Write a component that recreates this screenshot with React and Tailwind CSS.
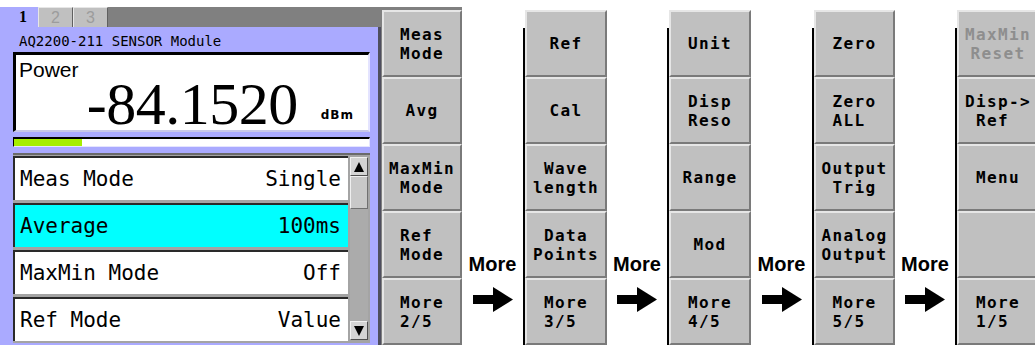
import React from 'react'

const MONO = "font-['DejaVu_Sans_Mono',monospace]"

const COLUMNS = [
  [{ t: 'Meas\nMode' }, { t: 'Avg' }, { t: 'MaxMin\nMode' }, { t: 'Ref \nMode' }, { t: 'More\n2/5 ' }],
  [{ t: 'Ref' }, { t: 'Cal' }, { t: 'Wave\nlength' }, { t: 'Data\nPoints' }, { t: 'More\n3/5 ' }],
  [{ t: 'Unit' }, { t: 'Disp\nReso' }, { t: 'Range' }, { t: 'Mod' }, { t: 'More\n4/5 ' }],
  [{ t: 'Zero' }, { t: 'Zero\nALL ' }, { t: 'Output\nTrig' }, { t: 'Analog\nOutput' }, { t: 'More\n5/5 ' }],
  [{ t: 'MaxMin\nReset', dim: true }, { t: 'Disp->\n Ref  ' }, { t: 'Menu' }, { t: '' }, { t: 'More\n1/5 ' }],
]

const ROWS = [
  { name: 'Meas Mode', value: 'Single' },
  { name: 'Average', value: '100ms', active: true },
  { name: 'MaxMin Mode', value: 'Off' },
  { name: 'Ref Mode', value: 'Value' },
]

function SoftKey({ t, dim }) {
  return (
    <div className="h-[67px] flex items-center justify-center bg-[#c0c0c0] border-2 border-t-[#e6e6e6] border-l-[#e6e6e6] border-b-[#7a7a7a] border-r-[#7a7a7a]">
      <div
        className={`${MONO} whitespace-pre text-center font-bold text-[16px] leading-[19px] tracking-[1.4px] ${dim ? 'text-[#8e8e8e]' : 'text-black'}`}
      >
        {t}
      </div>
    </div>
  )
}

function KeyStack({ keys, width }) {
  return (
    <div className={`mt-[10px] ${width} flex flex-col shrink-0`}>
      {keys.map((k, i) => (
        <SoftKey key={i} t={k.t} dim={k.dim} />
      ))}
    </div>
  )
}

function KeyColumn({ keys, width }) {
  return (
    <div className="flex shrink-0">
      <div className="w-[2px] mt-[28px] bg-black" />
      <KeyStack keys={keys} width={width} />
    </div>
  )
}

function MoreArrow({ width }) {
  return (
    <div className={`${width} shrink-0 flex flex-col items-center pt-[252px]`}>
      <span className="font-['Liberation_Sans',Arial,sans-serif] font-bold text-[20px] leading-[24px] text-black">More</span>
      <svg className="mt-[11px]" width="40" height="25" viewBox="0 0 40 25">
        <rect x="0" y="8" width="21" height="9" fill="#000" />
        <polygon points="20,0 40,12.5 20,25" fill="#000" />
      </svg>
    </div>
  )
}

function ScrollButton({ up }) {
  return (
    <div className="h-[19px] flex items-center justify-center bg-[#d4d4d4] border border-t-[#f0f0f0] border-l-[#f0f0f0] border-b-[#505050] border-r-[#505050]">
      <svg width="10" height="10" viewBox="0 0 10 10">
        {up ? <polygon points="5,0 10,10 0,10" fill="#000" /> : <polygon points="0,0 10,0 5,10" fill="#000" />}
      </svg>
    </div>
  )
}

function ParamList() {
  return (
    <div className="mt-[6px] h-[190px] flex gap-[2px] pr-[2px] pt-[1px] pb-[2px] bg-[#a4a4a4] border-t-2 border-t-[#6a6a6a]">
      <div className="w-[335px] flex flex-col gap-[3px]">
        {ROWS.map((r) => (
          <div
            key={r.name}
            className={`h-[44px] flex items-center justify-between pl-[5px] pr-[7px] border-t-2 border-l-2 border-t-[#2a2a2a] border-l-[#2a2a2a] ${r.active ? 'bg-[#00ffff]' : 'bg-white'} ${MONO} text-[21px] leading-none text-black`}
          >
            <span>{r.name}</span>
            <span>{r.value}</span>
          </div>
        ))}
      </div>
      <div className="w-[18px] flex flex-col pt-[1px] pb-[1px]">
        <ScrollButton up />
        <div className="h-[33px] bg-[#c8c8c8] border border-t-[#efefef] border-l-[#efefef] border-b-[#707070] border-r-[#707070]" />
        <div className="flex-1 bg-[#ababab]" />
        <ScrollButton />
      </div>
    </div>
  )
}

function ModulePanel() {
  return (
    <div className="w-[381px] flex flex-col shrink-0">
      <div className="h-[20px] flex">
        <div className="w-[38px] bg-[#aaaaff] pl-[19px] font-['Liberation_Serif',serif] font-bold text-[16px] leading-[19px] text-black">1</div>
        <div className="w-[35px] bg-[#c0c0c0] border border-t-[#e6e6e6] border-l-[#e6e6e6] border-r-[#606060] border-b-0 text-center font-['Liberation_Sans',sans-serif] text-[16px] leading-[19px] text-[#9c9c9c]">2</div>
        <div className="w-[35px] bg-[#c0c0c0] border border-t-[#e6e6e6] border-l-[#e6e6e6] border-r-[#606060] border-b-0 text-center font-['Liberation_Sans',sans-serif] text-[16px] leading-[19px] text-[#9c9c9c]">3</div>
        <div className="flex-1" />
      </div>
      <div className="flex-1 bg-[#aaaaff] border-r-[3px] border-r-[#4e4e5e] pl-[13px] pr-[8px] flex flex-col">
        <div className={`h-[25px] pt-[6px] pl-[6px] ${MONO} text-[14px] leading-[16px] text-black`}>AQ2200-211 SENSOR Module</div>
        <div className="h-[80px] bg-white border-t-[3px] border-l-[3px] border-t-black border-l-black border-r-2 border-b-2 border-r-[#e4e4ff] border-b-[#c8c8e8]">
          <div className="pt-[3px] pl-[3px] font-['Liberation_Sans',Arial,sans-serif] text-[21px] leading-[24px] text-black">Power</div>
          <div className="text-right pr-[14px] font-['Liberation_Serif',serif] text-[60px] leading-[44px] tracking-[-0.5px] text-black">
            <span>-84.1520</span>
            <span className="ml-[23px] align-[5px] font-['DejaVu_Sans',sans-serif] font-bold text-[12px] leading-none tracking-[1px]">dBm</span>
          </div>
        </div>
        <div className="mt-[5px] h-[10px] flex bg-white border-t-2 border-l border-t-black border-l-black border-r border-b border-r-[#e4e4ff] border-b-[#e4e4ff]">
          <div className="w-[68px] bg-[#a6ee00]" />
        </div>
        <ParamList />
      </div>
    </div>
  )
}

export default function App() {
  return (
    <div className="w-[1035px] h-[345px] flex bg-white overflow-hidden">
      <div className="mt-[7px] w-[462px] flex shrink-0 bg-[#808080]">
        <ModulePanel />
        <div className="w-px" />
        <div className="mt-[3px] w-[80px] flex flex-col">
          {COLUMNS[0].map((k, i) => (
            <SoftKey key={i} t={k.t} dim={k.dim} />
          ))}
        </div>
      </div>
      <MoreArrow width="w-[61px]" />
      <KeyColumn keys={COLUMNS[1]} width="w-[82px]" />
      <MoreArrow width="w-[60px]" />
      <KeyColumn keys={COLUMNS[2]} width="w-[82px]" />
      <MoreArrow width="w-[61px]" />
      <KeyColumn keys={COLUMNS[3]} width="w-[81px]" />
      <MoreArrow width="w-[60px]" />
      <KeyColumn keys={COLUMNS[4]} width="w-[82px]" />
    </div>
  )
}
